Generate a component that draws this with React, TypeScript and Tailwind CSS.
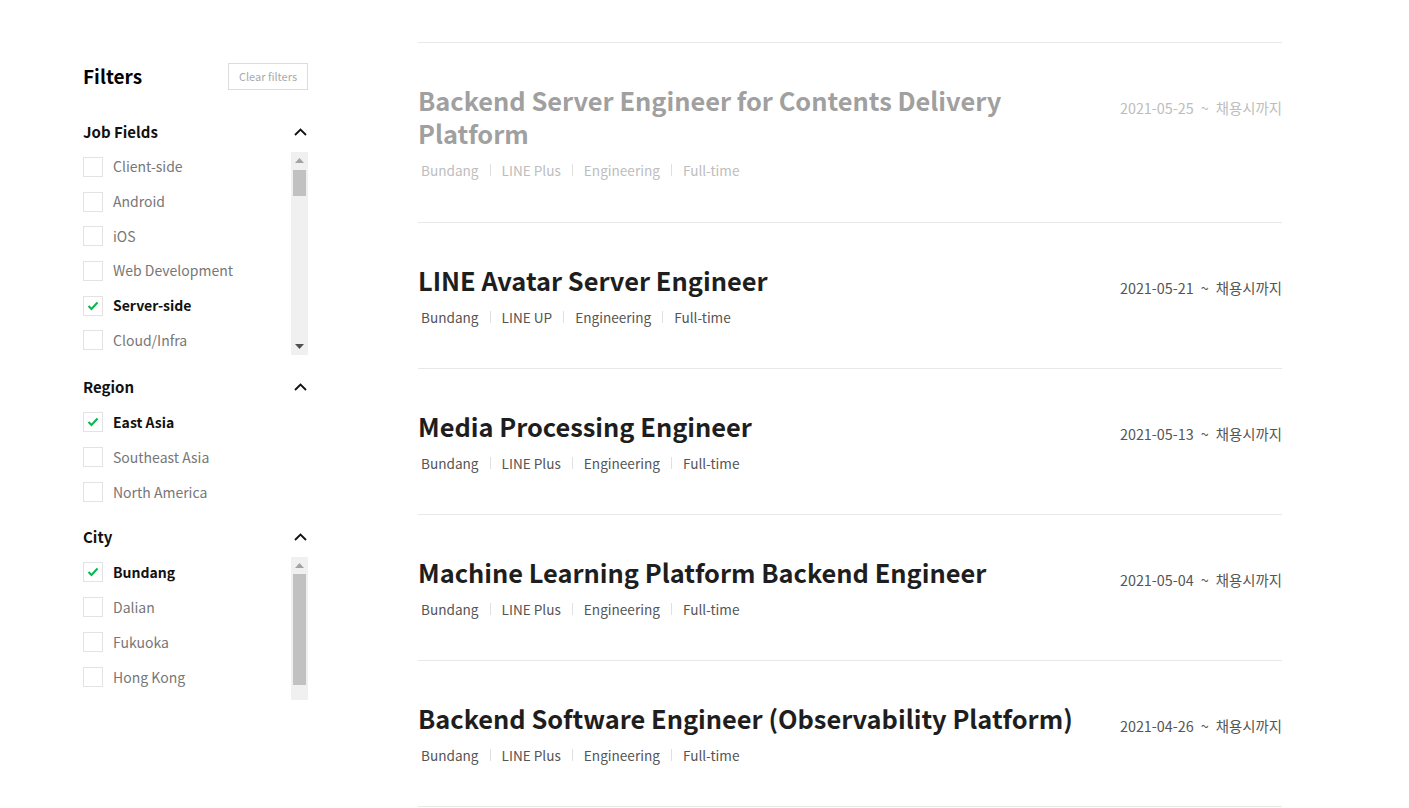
import React from "react";

const FONT = "font-['Noto_Sans_CJK_KR','Noto_Sans',sans-serif]";

type Opt = { label: string; checked?: boolean };

const jobFields: Opt[] = [
  { label: "Client-side" },
  { label: "Android" },
  { label: "iOS" },
  { label: "Web Development" },
  { label: "Server-side", checked: true },
  { label: "Cloud/Infra" },
];

const regions: Opt[] = [
  { label: "East Asia", checked: true },
  { label: "Southeast Asia" },
  { label: "North America" },
];

const cities: Opt[] = [
  { label: "Bundang", checked: true },
  { label: "Dalian" },
  { label: "Fukuoka" },
  { label: "Hong Kong" },
];

const jobs = [
  {
    title: "Backend Server Engineer for Contents Delivery Platform",
    company: "LINE Plus",
    date: "2021-05-25",
    closed: true,
  },
  { title: "LINE Avatar Server Engineer", company: "LINE UP", date: "2021-05-21" },
  { title: "Media Processing Engineer", company: "LINE Plus", date: "2021-05-13" },
  { title: "Machine Learning Platform Backend Engineer", company: "LINE Plus", date: "2021-05-04" },
  { title: "Backend Software Engineer (Observability Platform)", company: "LINE Plus", date: "2021-04-26" },
];

function Chevron() {
  return (
    <svg width="13" height="8" viewBox="0 0 13 8" className="mr-[1px]">
      <polyline points="1,7 6.5,1.5 12,7" fill="none" stroke="#111" strokeWidth="1.8" />
    </svg>
  );
}

function Checkbox({ checked }: { checked?: boolean }) {
  return (
    <span className="flex h-5 w-5 shrink-0 items-center justify-center border border-[#e3e3e3] bg-white">
      {checked && (
        <svg width="12" height="10" viewBox="0 0 12 10">
          <polyline points="1.5,5 4.5,8 10.5,1.5" fill="none" stroke="#06b74c" strokeWidth="2" />
        </svg>
      )}
    </span>
  );
}

function Item({ opt }: { opt: Opt }) {
  return (
    <li className="flex h-[30px] items-center gap-[10px]">
      <Checkbox checked={opt.checked} />
      <span className={opt.checked ? "text-[14px] font-bold text-[#111]" : "text-[14px] text-[#777]"}>
        {opt.label}
      </span>
    </li>
  );
}

function Scrollbar({ thumbTop, thumbHeight, down }: { thumbTop: string; thumbHeight: string; down?: boolean }) {
  return (
    <div className="flex w-[17px] shrink-0 flex-col items-center bg-[#f0f0f0]">
      <svg width="9" height="5" viewBox="0 0 9 5" className="mt-[6px]">
        <polygon points="0,5 4.5,0 9,5" fill="#a3a3a3" />
      </svg>
      <div className={`${thumbTop} ${thumbHeight} w-[13px] bg-[#c1c1c1]`} />
      <div className="flex-1" />
      {down && (
        <svg width="9" height="5" viewBox="0 0 9 5" className="mb-[6px]">
          <polygon points="0,0 9,0 4.5,5" fill="#505050" />
        </svg>
      )}
    </div>
  );
}

function Section({ title, children }: { title: string; children: React.ReactNode }) {
  return (
    <section>
      <div className="flex h-6 items-center justify-between">
        <h3 className="text-[15px] font-bold text-[#111]">{title}</h3>
        <Chevron />
      </div>
      <div className="mt-2">{children}</div>
    </section>
  );
}

function Sidebar() {
  return (
    <aside className="w-[225px] shrink-0 pt-[63px]">
      <div className="flex h-[27px] items-center justify-between">
        <h2 className="text-[19px] font-bold text-black">Filters</h2>
        <button className="h-[27px] w-[80px] border border-[#dcdcdc] text-[11px] text-[#aaa]">Clear filters</button>
      </div>

      <div className="mt-[30px]">
        <Section title="Job Fields">
          <div className="flex h-[203px]">
            <ul className="flex flex-1 flex-col gap-[5px] overflow-hidden">
              {jobFields.map((o) => (
                <Item key={o.label} opt={o} />
              ))}
            </ul>
            <Scrollbar thumbTop="mt-[7px]" thumbHeight="h-[26px]" down />
          </div>
        </Section>
      </div>

      <div className="mt-5">
        <Section title="Region">
          <ul className="flex flex-col gap-[5px]">
            {regions.map((o) => (
              <Item key={o.label} opt={o} />
            ))}
          </ul>
        </Section>
      </div>

      <div className="mt-[18px]">
        <Section title="City">
          <div className="flex h-[143px]">
            <ul className="flex flex-1 flex-col gap-[5px] overflow-hidden">
              {cities.map((o) => (
                <Item key={o.label} opt={o} />
              ))}
            </ul>
            <Scrollbar thumbTop="mt-[6px]" thumbHeight="h-[111px]" />
          </div>
        </Section>
      </div>
    </aside>
  );
}

function JobRow({ job }: { job: (typeof jobs)[number] }) {
  const meta = ["Bundang", job.company, "Engineering", "Full-time"];
  return (
    <li className="flex items-start justify-between border-b border-[#e8e8e8] pt-[41px] pb-[41px] first:pb-[42px]">
      <div className="max-w-[680px]">
        <h3
          className={`text-[25.4px] font-bold leading-[33px] ${job.closed ? "text-[#a0a0a0]" : "text-[#1e1e1e]"}`}
        >
          {job.title}
        </h3>
        <div
          className={`mt-[10px] flex h-5 items-center pl-[3px] text-[13.6px] ${job.closed ? "text-[#bdbdbd]" : "text-[#555]"}`}
        >
          {meta.map((m, i) => (
            <React.Fragment key={i}>
              {i > 0 && <span className="mx-[11px] h-[12px] w-px bg-[#e0e0e0]" />}
              <span>{m}</span>
            </React.Fragment>
          ))}
        </div>
      </div>
      <div className={`mt-[14px] text-[14.4px] leading-5 ${job.closed ? "text-[#bdbdbd]" : "text-[#555]"}`}>
        {job.date}
        <span className="mx-[7px]">~</span>
        채용시까지
      </div>
    </li>
  );
}

export default function App() {
  return (
    <div className={`flex min-h-screen bg-white pl-[83px] ${FONT}`}>
      <Sidebar />
      <main className="ml-[110px] w-[864px] pt-[42px]">
        <ul className="border-t border-[#e8e8e8]">
          {jobs.map((j) => (
            <JobRow key={j.title} job={j} />
          ))}
        </ul>
      </main>
    </div>
  );
}
